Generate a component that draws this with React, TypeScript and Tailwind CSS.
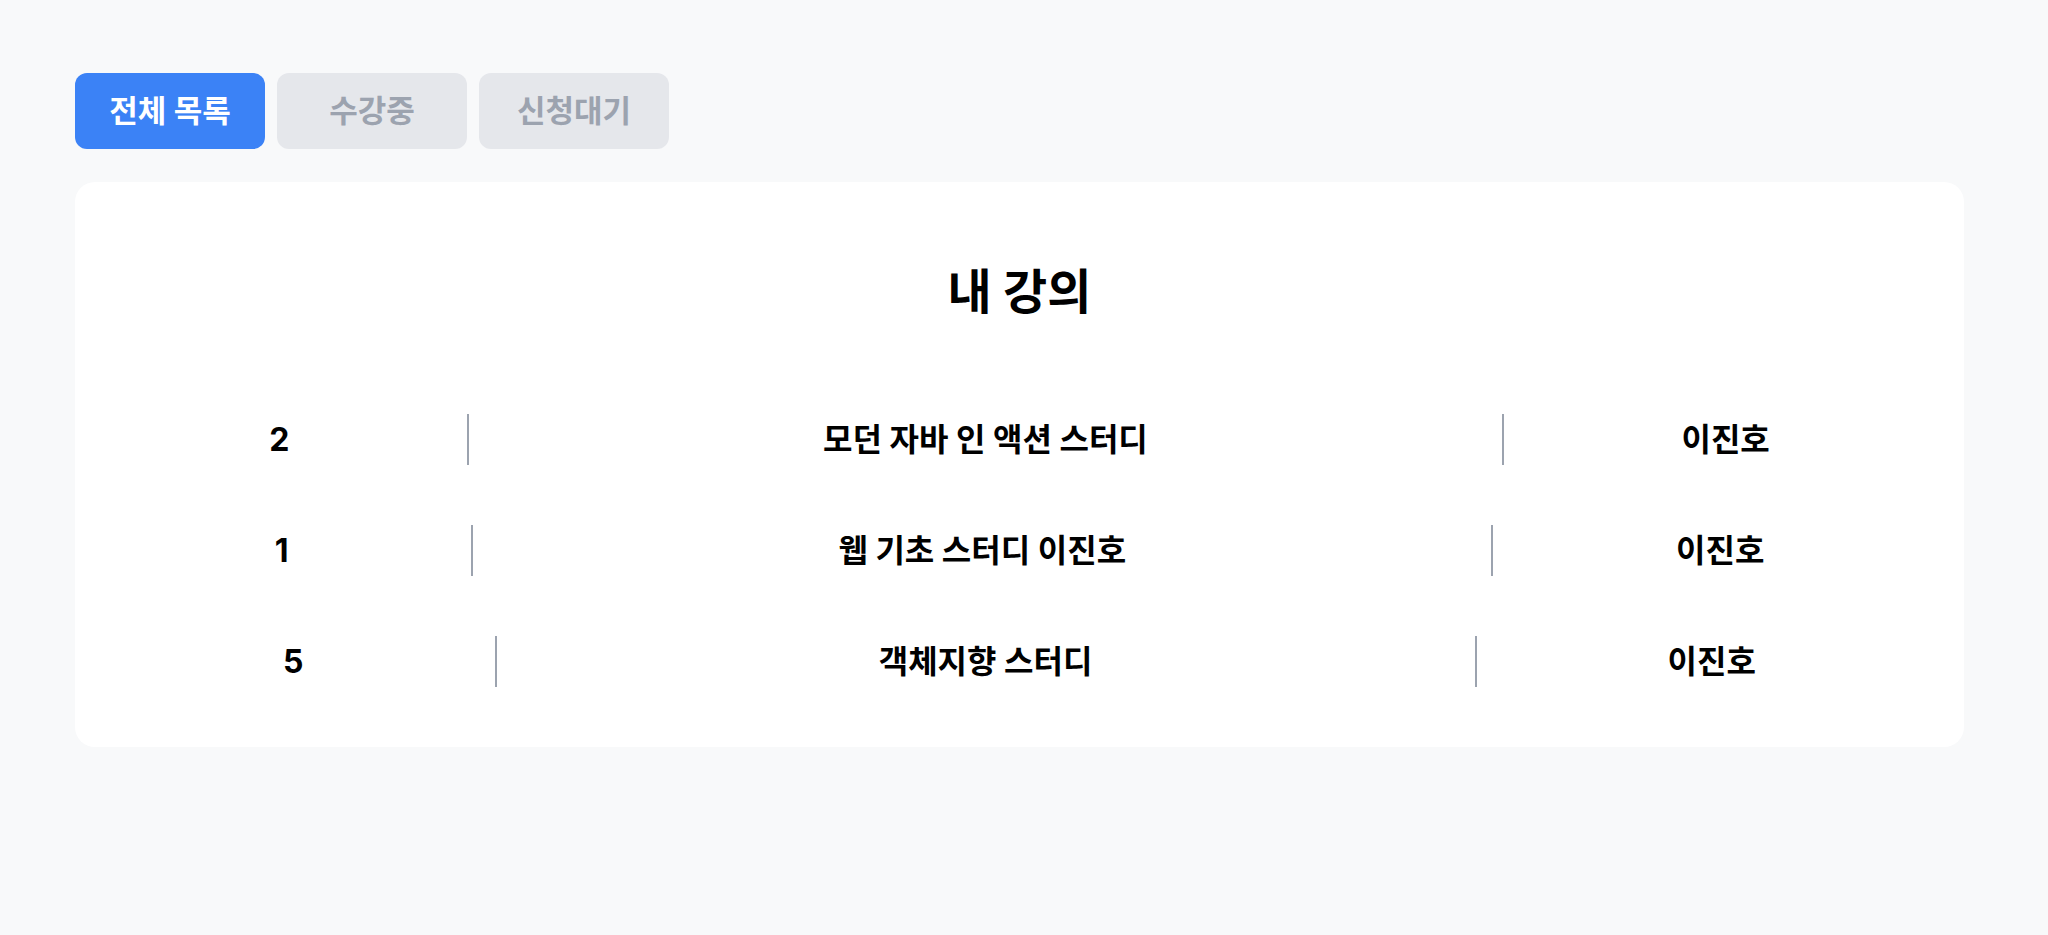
import React from "react";

const rows = [
  { id: "2", title: "모던 자바 인 액션 스터디", name: "이진호" },
  { id: "1", title: "웹 기초 스터디 이진호", name: "이진호" },
  { id: "5", title: "객체지향 스터디", name: "이진호" },
];

export default function App() {
  return (
    <div
      className="min-h-[935px] w-full bg-[#f8f9fa] pl-[75px] pr-[84px] pt-[73px]"
      style={{ fontFamily: 'Inter, "Noto Sans CJK KR", sans-serif' }}
    >
      <div className="flex gap-[12px]">
        <button className="flex h-[76px] w-[190px] items-center justify-center rounded-[12px] bg-[#3b82f6] text-[31px] font-bold text-white">
          전체 목록
        </button>
        <button className="flex h-[76px] w-[190px] items-center justify-center rounded-[12px] bg-[#e5e7eb] text-[31px] font-bold text-[#9ca3af]">
          수강중
        </button>
        <button className="flex h-[76px] w-[190px] items-center justify-center rounded-[12px] bg-[#e5e7eb] text-[31px] font-bold text-[#9ca3af]">
          신청대기
        </button>
      </div>
      <div className="mt-[33px] rounded-[20px] bg-white px-[17px] pb-[60px] pt-[77px]">
        <h1 className="text-center text-[48px] font-bold leading-[66px] text-black">내 강의</h1>
        <div className="mt-[89px] flex flex-col gap-[60px]">
          {rows.map((r) => (
            <div key={r.id} className="flex h-[51px] items-center text-[32px] font-bold text-black">
              <div className="grow text-center">{r.id}</div>
              <div className="w-[2px] self-stretch bg-[#9ca3af]" />
              <div className="grow-[2] text-center">{r.title}</div>
              <div className="w-[2px] self-stretch bg-[#9ca3af]" />
              <div className="grow text-center">{r.name}</div>
            </div>
          ))}
        </div>
      </div>
    </div>
  );
}
